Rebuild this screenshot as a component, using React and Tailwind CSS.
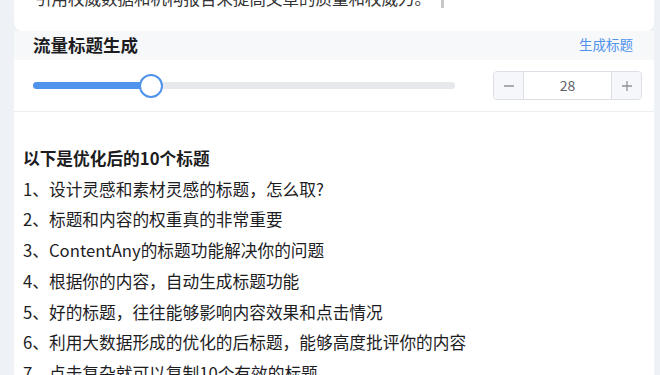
import { useState } from 'react';

const titles = [
  '1、设计灵感和素材灵感的标题，怎么取?',
  '2、标题和内容的权重真的非常重要',
  '3、ContentAny的标题功能解决你的问题',
  '4、根据你的内容，自动生成标题功能',
  '5、好的标题，往往能够影响内容效果和点击情况',
  '6、利用大数据形成的优化的后标题，能够高度批评你的内容',
  '7、点击复杂就可以复制10个有效的标题',
];

function Slider({ value, max = 100 }) {
  const pct = (value / max) * 100;
  return (
    <div className="relative h-[7px] w-[422px] rounded-full bg-[#e6e8ec]">
      <div className="absolute left-0 top-0 h-full rounded-full bg-[#4f93ec]" style={{ width: `${pct}%` }} />
      <div
        className="absolute top-1/2 h-[24px] w-[24px] -translate-x-1/2 -translate-y-1/2 rounded-full border-2 border-[#4f93ec] bg-white"
        style={{ left: `${pct}%` }}
      />
    </div>
  );
}

function Stepper({ value, onChange }) {
  return (
    <div className="flex h-[29px] w-[149px] overflow-hidden rounded-[4px] border border-[#dcdfe6] text-[#606266]">
      <button
        onClick={() => onChange(value - 1)}
        className="flex w-[30px] items-center justify-center border-r border-[#dcdfe6] bg-[#f5f7fa] text-[#909399]"
      >
        <svg width="12" height="12" viewBox="0 0 12 12"><path d="M1 6h10" stroke="currentColor" strokeWidth="1.3" /></svg>
      </button>
      <div className="flex flex-1 items-center justify-center text-[14px]">{value}</div>
      <button
        onClick={() => onChange(value + 1)}
        className="flex w-[30px] items-center justify-center border-l border-[#dcdfe6] bg-[#f5f7fa] text-[#909399]"
      >
        <svg width="12" height="12" viewBox="0 0 12 12"><path d="M1 6h10M6 1v10" stroke="currentColor" strokeWidth="1.3" /></svg>
      </button>
    </div>
  );
}

export default function App() {
  const [count, setCount] = useState(28);

  return (
    <div
      className="h-[375px] w-[660px] overflow-hidden bg-[#eef1f6] pl-[14px] pr-[6px] text-[#1d1d1f]"
      style={{ fontFamily: '"Noto Sans CJK SC", "Noto Sans", sans-serif' }}
    >
      {/* Previous card, scrolled off the top */}
      <div className="h-[31px] overflow-hidden rounded-b-lg bg-white pl-[21px]">
        <div className="-mt-[15px] flex items-center gap-[10px] text-[16.5px] leading-[26px] text-[#333]">
          <span>引用权威数据和机构报告来提高文章的质量和权威力。</span>
          <span className="h-[20px] w-[3px] bg-[#c8c8c8]" />
        </div>
      </div>

      {/* Section header */}
      <div className="flex h-[29px] items-center justify-between bg-[#f7f8fa] pl-[19px] pr-[21px]">
        <h2 className="-mt-[2px] text-[17.5px] font-bold leading-none">流量标题生成</h2>
        <button className="-mt-[2px] text-[13.5px] text-[#4f93ec]">生成标题</button>
      </div>

      {/* Controls */}
      <div className="flex h-[52px] items-center justify-between border-b border-[#ebeef2] bg-white pl-[19px] pr-[12px]">
        <Slider value={count} />
        <Stepper value={count} onChange={setCount} />
      </div>

      {/* Result */}
      <div className="h-full bg-white pl-[9px] pt-[31px] text-[16.7px] leading-[30.7px]">
        <p className="font-bold">以下是优化后的10个标题</p>
        {titles.map((t) => (
          <p key={t}>{t}</p>
        ))}
      </div>
    </div>
  );
}
